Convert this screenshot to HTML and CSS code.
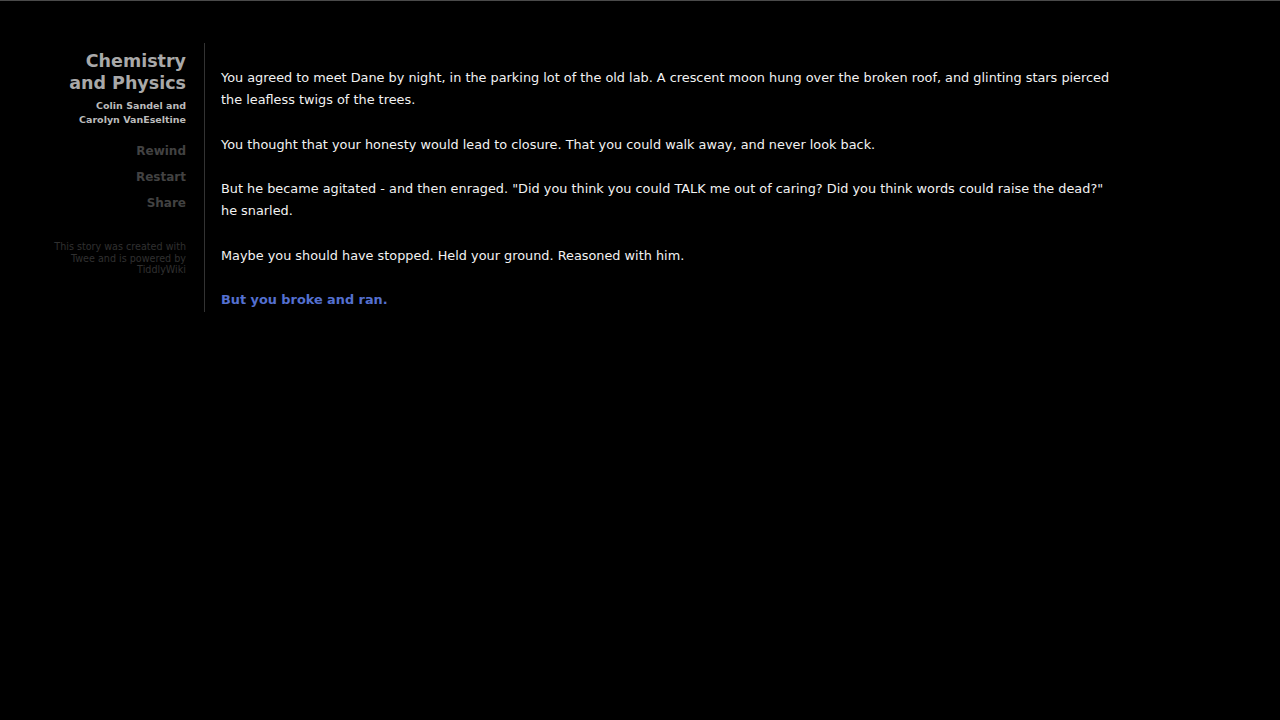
FILE: index.html
```html
<!DOCTYPE html>
<html>
<head>
<meta charset="utf-8">
<link rel="stylesheet" href="styles.css">
</head>
<body>
<div class="page">
  <div class="sidebar">
    <h1 class="title">Chemistry<br>and Physics</h1>
    <div class="authors">Colin Sandel and<br>Carolyn VanEseltine</div>
    <ul class="menu">
      <li>Rewind</li>
      <li>Restart</li>
      <li>Share</li>
    </ul>
    <div class="credits">This story was created with<br>Twee and is powered by<br>TiddlyWiki</div>
  </div>
  <div class="passages">
    <p>You agreed to meet Dane by night, in the parking lot of the old lab. A crescent moon hung over the broken roof, and glinting stars pierced the leafless twigs of the trees.</p>
    <p>You thought that your honesty would lead to closure. That you could walk away, and never look back.</p>
    <p>But he became agitated - and then enraged. "Did you think you could TALK me out of caring? Did you think words could raise the dead?" he snarled.</p>
    <p>Maybe you should have stopped. Held your ground. Reasoned with him.</p>
    <p><a class="link">But you broke and ran.</a></p>
  </div>
</div>
</body>
</html>
```
FILE: styles.css
```css
html, body {
  margin: 0;
  padding: 0;
  background: #000;
  height: 100%;
}
body {
  border-top: 1px solid #4a4a4a;
  box-sizing: border-box;
  font-family: "DejaVu Sans", Verdana, sans-serif;
}
.page {
  display: flex;
  align-items: flex-start;
  padding-top: 42px;
}
.sidebar {
  width: 146px;
  margin-left: 40px;
  padding-right: 18px;
  border-right: 1px solid #333;
  text-align: right;
  padding-top: 7px;
  padding-bottom: 36px;
}
.title {
  margin: 0;
  font-size: 17.5px;
  line-height: 22px;
  font-weight: bold;
  color: #a9a9a9;
}
.authors {
  margin-top: 5px;
  font-size: 9.5px;
  line-height: 14px;
  font-weight: bold;
  color: #bbb;
}
.menu {
  list-style: none;
  margin: 11px 0 0 0;
  padding: 0;
}
.menu li {
  font-size: 12px;
  line-height: 26px;
  font-weight: bold;
  color: #424242;
}
.credits {
  margin-top: 25px;
  font-size: 9.6px;
  line-height: 11.5px;
  color: #303030;
}
.passages {
  width: 900px;
  padding-left: 16px;
  padding-top: 24px;
}
.passages p {
  margin: 0 0 22.5px 0;
  font-size: 12.85px;
  line-height: 22px;
  color: #f2f2f2;
}
.link {
  color: #5470d0;
  font-weight: bold;
  cursor: pointer;
}
```
